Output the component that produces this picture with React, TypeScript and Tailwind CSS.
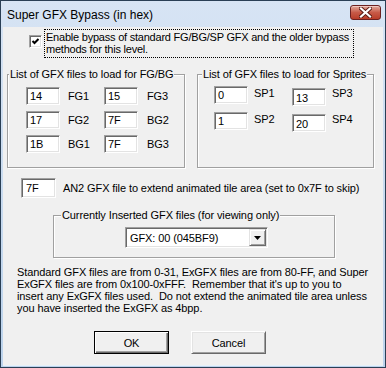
import React from "react";

const sunken =
  "bg-white border border-t-[#a0a0a0] border-l-[#a0a0a0] border-r-white border-b-white shadow-[inset_1px_1px_0_#696969,inset_-1px_-1px_0_#e3e3e3]";

const groupBox =
  "border border-[#a0a0a0] shadow-[inset_1px_1px_0_#fff,1px_1px_0_#fff] m-0 p-0 min-w-0";

const HexField = ({ value, className = "" }: { value: string; className?: string }) => (
  <div className={`${sunken} h-[18px] w-[34px] pl-[3px] flex items-center leading-[12px] ${className}`}>
    {value}
  </div>
);

const Legend = ({ children, className = "" }: { children: React.ReactNode; className?: string }) => (
  <legend className={`px-[1px] leading-[13px] bg-[#f0f0f0] ${className}`}>{children}</legend>
);

const App = () => {
  const fgbg = [
    ["14", "FG1", "15", "FG3"],
    ["17", "FG2", "7F", "BG2"],
    ["1B", "BG1", "7F", "BG3"],
  ];
  const sprites = [
    ["0", "SP1", "13", "SP3"],
    ["1", "SP2", "20", "SP4"],
  ];

  return (
    <div className="w-[386px] h-[368px] bg-[#2a3f55] p-px font-['Liberation_Sans',Arial,sans-serif] text-[11px] tracking-[-0.1px] text-black">
      <div className="h-full flex flex-col bg-gradient-to-b from-[#d7e4f4] to-[#bcd3ec] px-[2px] pb-[2px]">
        {/* title bar */}
        <div className="h-[26px] flex items-start">
          <span className="pt-[7px] pl-[4px] text-[12px] leading-[14px] tracking-normal text-black">
            Super GFX Bypass (in hex)
          </span>
          <div className="ml-auto mr-[2px] mt-[4px] w-[31px] h-[15px] rounded-[3px] border border-[#6b2020] bg-gradient-to-b from-[#e0a89c] via-[#c75a48] to-[#b83c28] flex items-center justify-center shadow-[inset_0_1px_0_#f0c8c0]">
            <svg width="13" height="11" viewBox="0 0 13 11">
              <path d="M2 1.5 L11 9.5 M11 1.5 L2 9.5" stroke="#5a1a14" strokeWidth="4" strokeLinecap="square" />
              <path d="M2 1.5 L11 9.5 M11 1.5 L2 9.5" stroke="#fff" strokeWidth="2.2" strokeLinecap="square" />
            </svg>
          </div>
        </div>

        {/* client area */}
        <div className="flex-1 bg-[#f0f0f0] flex flex-col shadow-[0_1px_0_#e6f2fa]">
          {/* bypass checkbox */}
          <div className="flex items-start pl-[26px] mt-[2px]">
            <div className={`${sunken} w-[13px] h-[13px] mt-[6px] flex items-center justify-center`}>
              <svg width="9" height="9" viewBox="0 0 9 9">
                <path d="M1.5 4 L3.5 6 L7.5 2" stroke="#000" strokeWidth="2" fill="none" />
              </svg>
            </div>
            <div className="ml-[2px] w-[310px] border border-dotted border-black px-[1px] pt-[1px] pb-[2px] leading-[12px] whitespace-nowrap tracking-[-0.22px]">
              Enable bypass of standard FG/BG/SP GFX and the older bypass
              <br />
              methods for this level.
            </div>
          </div>

          {/* file lists */}
          <div className="flex mt-[10px]">
            <fieldset className={`${groupBox} ml-[4px] w-[178px] h-[100px]`}>
              <Legend className="ml-[1px]">List of GFX files to load for FG/BG</Legend>
              <div className="flex flex-col gap-[6px] pt-[6px] pl-[18px]">
                {fgbg.map((r) => (
                  <div key={r[1]} className="flex items-center">
                    <HexField value={r[0]} />
                    <span className="ml-[8px] w-[36px] leading-[12px]">{r[1]}</span>
                    <HexField value={r[2]} />
                    <span className="ml-[9px] leading-[12px]">{r[3]}</span>
                  </div>
                ))}
              </div>
            </fieldset>

            <fieldset className={`${groupBox} ml-[12px] w-[177px] h-[100px]`}>
              <Legend className="ml-[4px]">List of GFX files to load for Sprites</Legend>
              <div className="flex flex-col gap-[6px] pt-[5px] pl-[16px]">
                {sprites.map((r) => (
                  <div key={r[1]} className="flex items-start">
                    <HexField value={r[0]} />
                    <span className="ml-[6px] w-[38px] pt-[1px] leading-[12px]">{r[1]}</span>
                    <HexField value={r[2]} className="mt-[2px] pt-[2px]" />
                    <span className="ml-[6px] pt-[1px] leading-[12px]">{r[3]}</span>
                  </div>
                ))}
              </div>
            </fieldset>
          </div>

          {/* animated tile area */}
          <div className="flex items-center mt-[10px] pl-[18px]">
            <div className={`${sunken} w-[35px] h-[20px] pl-[4px] flex items-center leading-[12px]`}>7F</div>
            <span className="ml-[7px] leading-[12px]">
              AN2 GFX file to extend animated tile area (set to 0x7F to skip)
            </span>
          </div>

          {/* currently inserted */}
          <fieldset className={`${groupBox} ml-[50px] mt-[11px] w-[282px] h-[49px]`}>
            <Legend className="ml-[7px]">Currently Inserted GFX files (for viewing only)</Legend>
            <div className="mt-[5px] ml-[71px]">
              <div className={`${sunken} w-[143px] h-[21px] flex items-center justify-between pl-[4px] pr-[1px]`}>
                <span className="leading-[12px]">GFX: 00 (045BF9)</span>
                <div className="w-[17px] h-[17px] bg-[#f0f0f0] border border-t-[#e3e3e3] border-l-[#e3e3e3] border-r-[#696969] border-b-[#696969] shadow-[inset_1px_1px_0_#fff,inset_-1px_-1px_0_#a0a0a0] flex items-center justify-center">
                  <svg width="7" height="4" viewBox="0 0 7 4">
                    <path d="M0 0 H7 L3.5 4 Z" fill="#000" />
                  </svg>
                </div>
              </div>
            </div>
          </fieldset>

          {/* notes */}
          <p className="mt-[8px] pl-[14px] leading-[12px] whitespace-nowrap">
            Standard GFX files are from 0-31, ExGFX files are from 80-FF, and Super
            <br />
            ExGFX files are from 0x100-0xFFF.&nbsp; Remember that it's up to you to
            <br />
            insert any ExGFX files used.&nbsp; Do not extend the animated tile area unless
            <br />
            you have inserted the ExGFX as 4bpp.
          </p>

          {/* buttons */}
          <div className="flex mt-[17px] pl-[91px] gap-[22px]">
            <button className="w-[75px] h-[23px] border border-black bg-[#f0f0f0] shadow-[inset_1px_1px_0_#fff,inset_-1px_-1px_0_#696969,inset_-2px_-2px_0_#a0a0a0] leading-[12px]">
              OK
            </button>
            <button className="w-[75px] h-[23px] border border-t-white border-l-white border-r-[#696969] border-b-[#696969] bg-[#f0f0f0] shadow-[inset_1px_1px_0_#e3e3e3,inset_-1px_-1px_0_#a0a0a0] leading-[12px]">
              Cancel
            </button>
          </div>
        </div>
      </div>
    </div>
  );
};

export default App;
